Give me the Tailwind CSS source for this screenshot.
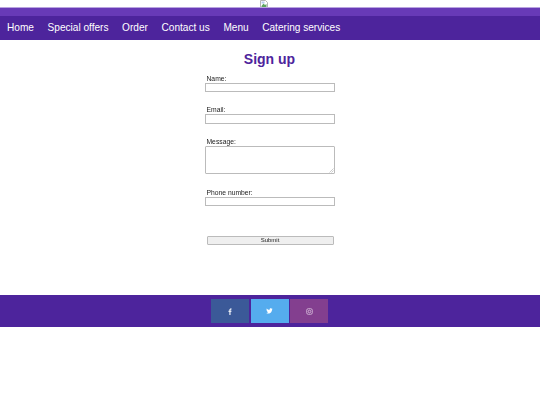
<!DOCTYPE html>
<html lang="en">
<head>
  <meta charset="UTF-8" />
  <title>Sign up</title>
  <script src="https://cdn.jsdelivr.net/npm/@tailwindcss/browser@4"></script>
</head>
<body class="bg-white font-['Liberation_Sans',Arial,sans-serif] text-[#222]">
  <header>
    <div class="h-[7px] flex justify-center pr-[12px] overflow-hidden">
      <svg class="shrink-0" width="8" height="7" viewBox="0 0 8 7">
        <path d="M0.5 0.5H5.5L7.5 2.5V8H0.5Z" fill="#fff" stroke="#b4b4b4" stroke-width="1" />
        <path d="M1.5 6L3.5 3.5L5 5L6.5 4V7H1.5Z" fill="#5fa560" />
        <rect x="1.5" y="1.5" width="3" height="2" fill="#b9cdf0" />
      </svg>
    </div>
    <div class="h-[9px] bg-[#683ab7] border-t border-[#b9a3e0]"></div>
    <nav class="h-[24px] bg-[#4d249c] flex items-center gap-[13.6px] pl-[7px] text-[10.1px] text-white">
      <a href="#">Home</a>
      <a href="#">Special offers</a>
      <a href="#">Order</a>
      <a href="#">Contact us</a>
      <a href="#">Menu</a>
      <a href="#">Catering services</a>
    </nav>
  </header>

  <main class="h-[255px] flex flex-col items-center pr-[1px]">
    <h1 class="mt-[10px] text-[14px] leading-[18px] font-bold text-[#4d249c]">Sign up</h1>
    <form class="mt-[7px] w-[130px] text-[6.75px] leading-[8px] [will-change:opacity]">
      <label class="block pl-[2px]">Name:</label>
      <input type="text" class="block w-full h-[9px] border border-[#bbb] bg-white" />
      <label class="block pl-[2px] mt-[14px]">Email:</label>
      <input type="text" class="block w-full h-[10px] border border-[#bbb] bg-white" />
      <label class="block pl-[2px] mt-[14px]">Message:</label>
      <div class="relative h-[28px]">
        <textarea class="block w-full h-full resize-none border border-[#bbb] rounded-[1px] bg-white"></textarea>
        <svg class="absolute right-[1px] bottom-[1px]" width="5" height="5" viewBox="0 0 5 5" stroke="#aaa" stroke-width="0.6"><path d="M0.5 4.5L4.5 0.5M2.5 4.5L4.5 2.5" /></svg>
      </div>
      <label class="block pl-[2px] mt-[15px]">Phone number:</label>
      <input type="text" class="block w-full h-[9px] border border-[#bbb] bg-white" />
      <button type="button" class="block ml-[2px] mt-[30px] w-[127px] h-[9px] border border-[#bbb] rounded-[1px] bg-[#efefef] text-[6px] leading-[7px]">Submit</button>
    </form>
  </main>

  <footer class="h-[32px] bg-[#4d249c] flex justify-center items-center gap-[1.5px] pr-[1px]">
    <a href="#" class="w-[38px] h-[24px] bg-[#3b5998] flex items-center justify-center">
      <svg width="6" height="7" viewBox="0 0 6 7"><path d="M2.4 7V3.8H1.4V2.7H2.4V1.9C2.4 0.9 3 0.4 3.8 0.4H4.6V1.5H4C3.6 1.5 3.5 1.7 3.5 2V2.7H4.6L4.4 3.8H3.5V7Z" fill="#fff" /></svg>
    </a>
    <a href="#" class="w-[38px] h-[24px] bg-[#55acee] flex items-center justify-center">
      <svg width="7" height="6" viewBox="0 0 7 6"><path d="M0.3 5C1.5 5.7 3 5.7 4.2 5C5.4 4.2 6 3 6 1.7L6.6 1L5.9 1.2L6.5 0.5L5.7 0.8C5.2 0.2 4.3 0.2 3.8 0.7C3.5 1 3.4 1.5 3.5 1.9C2.4 1.9 1.4 1.3 0.7 0.5C0.4 1.1 0.5 1.9 1.1 2.3L0.6 2.2C0.6 2.8 1 3.3 1.6 3.4L1.1 3.5C1.3 3.9 1.7 4.2 2.2 4.2C1.7 4.7 1 4.9 0.3 5Z" fill="#fff" /></svg>
    </a>
    <a href="#" class="w-[38px] h-[24px] bg-[#833f8f] flex items-center justify-center">
      <svg width="7" height="7" viewBox="0 0 7 7" fill="none" stroke="#e6d5ea" stroke-width="0.7"><rect x="0.7" y="0.7" width="5.6" height="5.6" rx="1.6" /><circle cx="3.5" cy="3.5" r="1.3" /></svg>
    </a>
  </footer>
</body>
</html>
